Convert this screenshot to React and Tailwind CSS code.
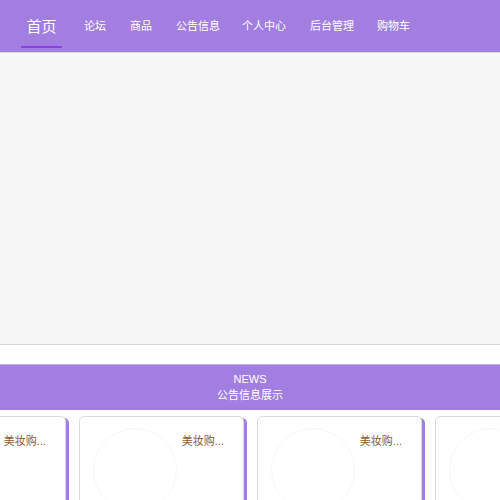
export default function App() {
  const navs = [
    { t: "论坛", ml: "ml-[11px]" },
    { t: "商品", ml: "ml-[2px]" },
    { t: "公告信息", ml: "ml-[2px]" },
    { t: "个人中心", ml: "ml-0" },
    { t: "后台管理", ml: "ml-[2px]" },
    { t: "购物车", ml: "ml-[1px]" },
  ];
  const cards = [0, 1, 2, 3];
  return (
    <div className="w-[500px] h-[500px] overflow-hidden bg-white font-['Liberation_Sans','Noto_Sans_CJK_SC',sans-serif]">
      <div className="h-[53px] bg-[#a37ee1] border-b border-[#d6d6d6] flex items-stretch pl-[21px]">
        <div className="w-[41px] flex flex-col items-center justify-center relative">
          <span className="text-[15px] text-white leading-none">首页</span>
          <div className="absolute left-0 right-0 bottom-[4px] h-[2px] bg-[#8a3de2] rounded-sm"></div>
        </div>
        {navs.map((n) => (
          <div key={n.t} className={`${n.ml} px-[11px] flex items-center text-[11px] text-white`}>
            <span>{n.t}</span>
          </div>
        ))}
      </div>
      <div className="h-[292px] bg-[#f7f7f7] border-b border-[#d8d8d8]"></div>
      <div className="h-[19px] bg-white"></div>
      <div className="h-[46px] bg-[#a37ee1] border-t border-[#c6aef0] flex flex-col items-center justify-center text-white text-[11px] leading-[16px]">
        <div className="-mt-[2px]">NEWS</div>
        <div>公告信息展示</div>
      </div>
      <div className="flex gap-[13px] ml-[-99px] mt-[6px]">
        {cards.map((c) => (
          <div
            key={c}
            className="shrink-0 w-[165px] h-[120px] bg-white border border-[#dcdcdc] rounded-[5px] shadow-[3px_2px_0_#a37ee1] relative overflow-hidden"
          >
            <div className="absolute left-[13px] top-[11px] w-[84px] h-[84px] rounded-full border border-[#f6f6f6]"></div>
            <div className="absolute right-[19px] top-[16px] text-[11px] text-[#8b5a2b]">美妆购...</div>
          </div>
        ))}
      </div>
    </div>
  );
}
